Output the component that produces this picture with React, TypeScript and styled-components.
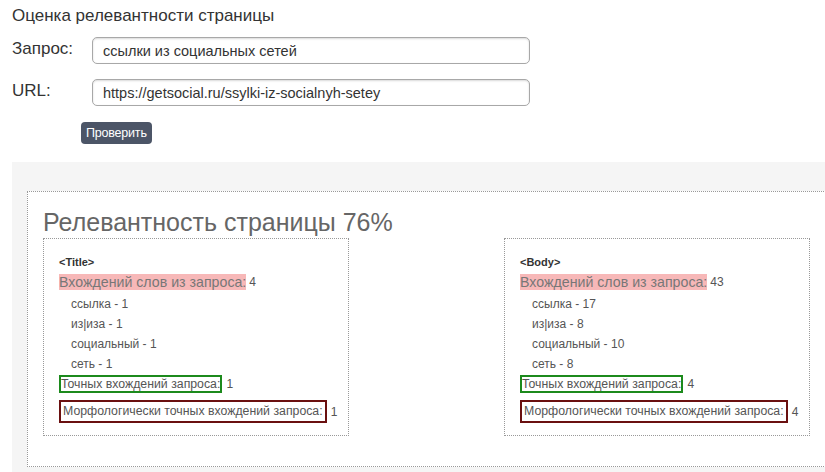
import styled, { createGlobalStyle } from "styled-components";

const GlobalStyle = createGlobalStyle`
  html, body {
    margin: 0;
    padding: 0;
    background: #fff;
    overflow: hidden;
  }
  body {
    font-family: "Liberation Sans", Arial, sans-serif;
    color: #333;
  }
`;

const Form = styled.div`
  padding: 5px 0 0 12px;
`;

const Heading = styled.h3`
  margin: 0;
  font-size: 17px;
  font-weight: normal;
  line-height: 22px;
  color: #333;
`;

const FieldRow = styled.div`
  display: flex;
  align-items: center;
  margin-top: ${(p: { $top: number }) => p.$top}px;
`;

const Label = styled.label`
  width: 80px;
  font-size: 17px;
  line-height: 20px;
  color: #333;
  margin-top: -4px;
`;

const Input = styled.input`
  box-sizing: border-box;
  width: 438px;
  height: 27px;
  padding: 0 0 0 10px;
  border: 1px solid #a8a8a8;
  border-radius: 5px;
  box-shadow: inset 0 1px 2px rgba(0, 0, 0, 0.15);
  font-family: "Liberation Sans", Arial, sans-serif;
  font-size: 14.5px;
  color: #333;
  outline: none;
`;

const Button = styled.button`
  display: block;
  margin: 16px 0 0 69px;
  height: 22px;
  padding: 0 5px;
  border: none;
  border-radius: 4px;
  background: #4c5567;
  color: #fff;
  font-family: "Liberation Sans", Arial, sans-serif;
  font-size: 12.5px;
  letter-spacing: -0.2px;
  cursor: pointer;
`;

const Panel = styled.div`
  margin: 18px 0 0 12px;
  padding: 29px 0 10px 15px;
  background: #f5f5f5;
`;

const Report = styled.div`
  box-sizing: border-box;
  width: 799px;
  padding: 14px 15px 30px 15px;
  background: #fff;
  border: 1px dotted #999;
`;

const ReportTitle = styled.h2`
  margin: 0;
  font-size: 25px;
  font-weight: normal;
  line-height: 32px;
  color: #666;
`;

const Columns = styled.div`
  display: flex;
  justify-content: space-between;
`;

const Section = styled.div`
  box-sizing: border-box;
  width: 306px;
  height: 198px;
  padding: 16px 15px 0 15px;
  border: 1px dotted #999;
`;

const Tag = styled.div`
  font-size: 11px;
  font-weight: bold;
  line-height: 14px;
  color: #333;
`;

const Line = styled.div`
  margin-top: ${(p: { $top: number }) => p.$top}px;
  font-size: 12px;
  line-height: 16px;
  color: #444;
  display: flex;
  align-items: center;
  white-space: nowrap;
`;

const Marked = styled.span`
  font-size: 14.2px;
  line-height: 16px;
  color: #777;
  background: #f7b8b8;
  margin-right: 3px;
`;

const WordList = styled.div`
  margin-top: 6px;
  display: flex;
  flex-direction: column;
  gap: 4px;
`;

const Word = styled.div`
  padding-left: 12px;
  font-size: 12px;
  line-height: 16px;
  color: #555;
`;

const Framed = styled.span<{ $color: string; $pad: number; $h: number }>`
  box-sizing: border-box;
  display: inline-block;
  height: ${(p) => p.$h}px;
  line-height: ${(p) => p.$h - 4}px;
  padding: 0 ${(p) => p.$pad}px;
  border: 2px solid ${(p) => p.$color};
  color: #555;
  font-size: 12.3px;
  margin-right: 4px;
`;

const Count = styled.span`
  color: #555;
`;

type Stats = {
  tag: string;
  total: number;
  words: [string, number][];
  exact: number;
  morph: number;
};

const sections: Stats[] = [
  {
    tag: "<Title>",
    total: 4,
    words: [
      ["ссылка", 1],
      ["из|иза", 1],
      ["социальный", 1],
      ["сеть", 1],
    ],
    exact: 1,
    morph: 1,
  },
  {
    tag: "<Body>",
    total: 43,
    words: [
      ["ссылка", 17],
      ["из|иза", 8],
      ["социальный", 10],
      ["сеть", 8],
    ],
    exact: 4,
    morph: 4,
  },
];

const StatsBlock = ({ data }: { data: Stats }) => (
  <Section>
    <Tag>{data.tag}</Tag>
    <Line $top={5}>
      <Marked>Вхождений слов из запроса:</Marked>
      <Count>{data.total}</Count>
    </Line>
    <WordList>
      {data.words.map(([w, n]) => (
        <Word key={w}>
          {w} - {n}
        </Word>
      ))}
    </WordList>
    <Line $top={3}>
      <Framed $color="#1c8a1c" $pad={0} $h={18}>
        Точных вхождений запроса:
      </Framed>
      <Count>{data.exact}</Count>
    </Line>
    <Line $top={7}>
      <Framed $color="#6a1010" $pad={2} $h={23}>
        Морфологически точных вхождений запроса:
      </Framed>
      <Count>{data.morph}</Count>
    </Line>
  </Section>
);

export default function App() {
  return (
    <>
      <GlobalStyle />
      <Form>
        <Heading>Оценка релевантности страницы</Heading>
        <FieldRow $top={10}>
          <Label>Запрос:</Label>
          <Input defaultValue="ссылки из социальных сетей" />
        </FieldRow>
        <FieldRow $top={15}>
          <Label>URL:</Label>
          <Input defaultValue="https://getsocial.ru/ssylki-iz-socialnyh-setey" />
        </FieldRow>
        <Button>Проверить</Button>
      </Form>
      <Panel>
        <Report>
          <ReportTitle>Релевантность страницы 76%</ReportTitle>
          <Columns>
            {sections.map((s) => (
              <StatsBlock key={s.tag} data={s} />
            ))}
          </Columns>
        </Report>
      </Panel>
    </>
  );
}
